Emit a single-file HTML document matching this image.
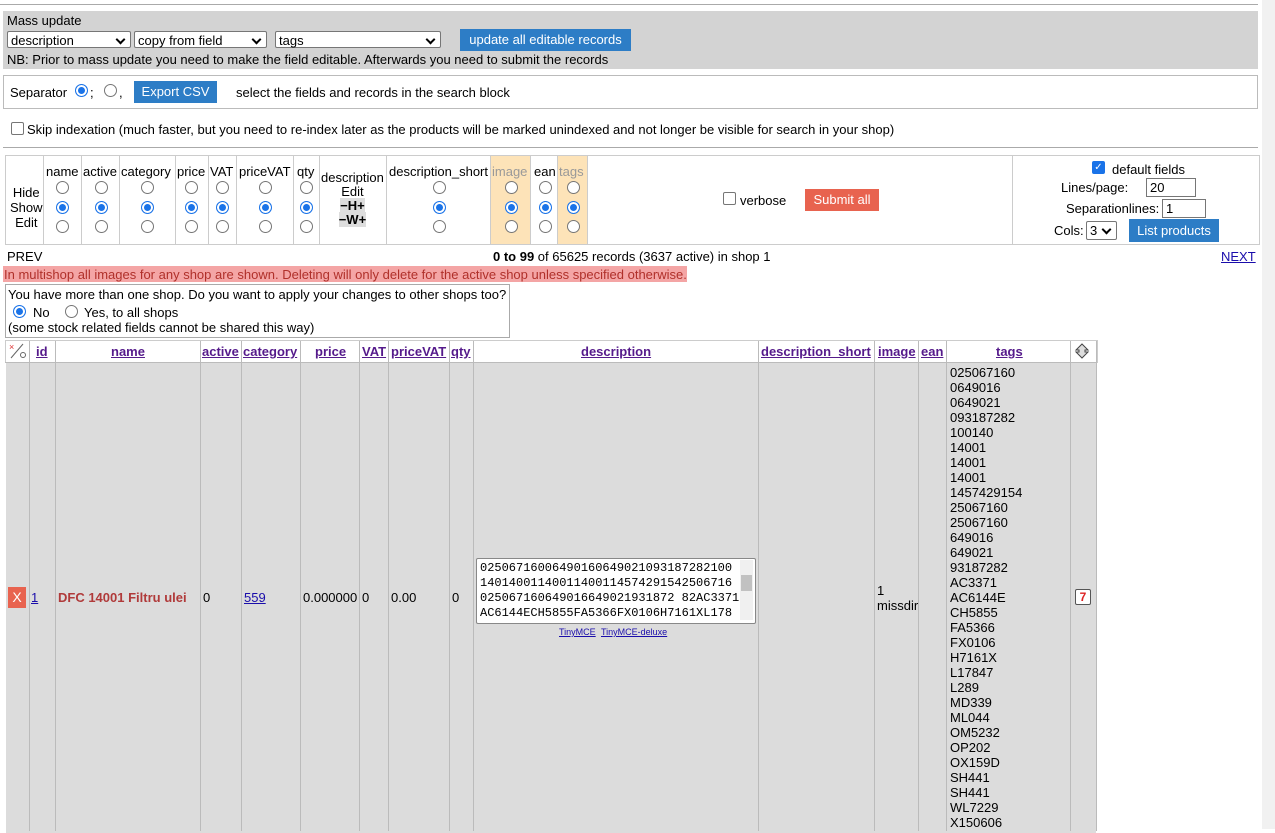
<!DOCTYPE html>
<html><head><style>
body{margin:0;width:1275px;height:829px;overflow:hidden;background:#fff;font-family:"Liberation Sans",Arial,sans-serif;font-size:13px;color:#000;position:relative}
.a{position:absolute;white-space:nowrap}
.r,.rc{position:absolute;width:11px;height:11px;border:1px solid #767676;border-radius:50%;background:#fff}
.rc{border-color:#1a73e8;background:#1a73e8;box-shadow:inset 0 0 0 2px #fff}
.sel{position:absolute;height:17px;border:1px solid #767676;border-radius:2px;background:#fff;font-size:13px;line-height:17px;padding-left:3px;box-sizing:border-box}
.sel:after{content:"";position:absolute;right:6px;top:4px;width:5px;height:5px;border-right:2px solid #000;border-bottom:2px solid #000;transform:rotate(45deg)}
.btn{position:absolute;color:#fff;text-align:center;font-size:13px}
.vl{position:absolute;width:1px;background:#ccc}
.u{color:#551a8b;text-decoration:underline;font-weight:bold}
.inp{position:absolute;border:1px solid #767676;background:#fff;height:19px;box-sizing:border-box;padding-left:3px;line-height:17px}
.cb{position:absolute;width:11px;height:11px;border:1px solid #767676;border-radius:2px;background:#fff}
</style></head><body>
<div class="a" style="left:0;top:4px;width:1258px;height:1px;background:#aaa"></div>
<div class="a" style="left:3px;top:11px;width:1255px;height:58px;background:#d3d3d3"></div>
<div class="a" style="left:7px;top:13px">Mass update</div>
<div class="sel" style="left:7px;top:31px;width:124px">description</div>
<div class="sel" style="left:134px;top:31px;width:133px">copy from field</div>
<div class="sel" style="left:275px;top:31px;width:166px">tags</div>
<div class="btn" style="left:460px;top:29px;width:171px;height:22px;line-height:22px;background:#2d7dc6">update all editable records</div>
<div class="a" style="left:7px;top:52px">NB: Prior to mass update you need to make the field editable. Afterwards you need to submit the records</div>

<div class="a" style="left:3px;top:75px;width:1253px;height:32px;border:1px solid #bbb"></div>
<div class="a" style="left:10px;top:85px">Separator</div>
<div class="rc" style="left:75px;top:84px"></div><div class="a" style="left:90px;top:85px">;</div>
<div class="r" style="left:104px;top:84px"></div><div class="a" style="left:119px;top:85px">,</div>
<div class="btn" style="left:134px;top:81px;width:83px;height:22px;line-height:22px;background:#2d7dc6">Export CSV</div>
<div class="a" style="left:236px;top:85px">select the fields and records in the search block</div>

<div class="cb" style="left:11px;top:122px"></div>
<div class="a" style="left:27px;top:122px">Skip indexation (much faster, but you need to re-index later as the products will be marked unindexed and not longer be visible for search in your shop)</div>
<div class="a" style="left:3px;top:147px;width:1255px;height:1px;background:#aaa"></div>

<div class="a" style="left:5px;top:155px;width:1253px;height:88px;border:1px solid #ccc"></div>
<div class="a" style="left:490px;top:156px;width:40px;height:88px;background:#fde3b8"></div>
<div class="a" style="left:557px;top:156px;width:30px;height:88px;background:#fde3b8"></div>
<div class="vl" style="left:43px;top:156px;height:88px"></div>
<div class="vl" style="left:81px;top:156px;height:88px"></div>
<div class="vl" style="left:119px;top:156px;height:88px"></div>
<div class="vl" style="left:175px;top:156px;height:88px"></div>
<div class="vl" style="left:208px;top:156px;height:88px"></div>
<div class="vl" style="left:236px;top:156px;height:88px"></div>
<div class="vl" style="left:293px;top:156px;height:88px"></div>
<div class="vl" style="left:319px;top:156px;height:88px"></div>
<div class="vl" style="left:386px;top:156px;height:88px"></div>
<div class="vl" style="left:490px;top:156px;height:88px"></div>
<div class="vl" style="left:530px;top:156px;height:88px"></div>
<div class="vl" style="left:557px;top:156px;height:88px"></div>
<div class="vl" style="left:587px;top:156px;height:88px"></div>
<div class="vl" style="left:1012px;top:156px;height:88px"></div>
<div class="a" style="left:10px;top:185px;line-height:15px;text-align:center">Hide<br>Show<br>Edit</div>
<div class="a" style="left:46px;top:164px">name</div>
<div class="a" style="left:83px;top:164px">active</div>
<div class="a" style="left:121px;top:164px">category</div>
<div class="a" style="left:177px;top:164px">price</div>
<div class="a" style="left:210px;top:164px">VAT</div>
<div class="a" style="left:239px;top:164px">priceVAT</div>
<div class="a" style="left:297px;top:164px">qty</div>
<div class="a" style="left:321px;top:171px;line-height:14px;text-align:center">description<br>Edit<br><b style="background:#ddd">−H+</b><br><b style="background:#ddd">−W+</b></div>
<div class="a" style="left:389px;top:164px">description_short</div>
<div class="a" style="left:492px;top:164px;color:#999">image</div>
<div class="a" style="left:534px;top:164px">ean</div>
<div class="a" style="left:559px;top:164px;color:#999">tags</div>
<div class="r" style="left:56px;top:181px"></div><div class="rc" style="left:56px;top:201px"></div><div class="r" style="left:56px;top:220px"></div>
<div class="r" style="left:95px;top:181px"></div><div class="rc" style="left:95px;top:201px"></div><div class="r" style="left:95px;top:220px"></div>
<div class="r" style="left:141px;top:181px"></div><div class="rc" style="left:141px;top:201px"></div><div class="r" style="left:141px;top:220px"></div>
<div class="r" style="left:185px;top:181px"></div><div class="rc" style="left:185px;top:201px"></div><div class="r" style="left:185px;top:220px"></div>
<div class="r" style="left:216px;top:181px"></div><div class="rc" style="left:216px;top:201px"></div><div class="r" style="left:216px;top:220px"></div>
<div class="r" style="left:259px;top:181px"></div><div class="rc" style="left:259px;top:201px"></div><div class="r" style="left:259px;top:220px"></div>
<div class="r" style="left:300px;top:181px"></div><div class="rc" style="left:300px;top:201px"></div><div class="r" style="left:300px;top:220px"></div>
<div class="r" style="left:433px;top:181px"></div><div class="rc" style="left:433px;top:201px"></div><div class="r" style="left:433px;top:220px"></div>
<div class="r" style="left:505px;top:181px"></div><div class="rc" style="left:505px;top:201px"></div><div class="r" style="left:505px;top:220px"></div>
<div class="r" style="left:539px;top:181px"></div><div class="rc" style="left:539px;top:201px"></div><div class="r" style="left:539px;top:220px"></div>
<div class="r" style="left:567px;top:181px"></div><div class="rc" style="left:567px;top:201px"></div><div class="r" style="left:567px;top:220px"></div>
<div class="cb" style="left:723px;top:192px"></div>
<div class="a" style="left:740px;top:193px">verbose</div>
<div class="btn" style="left:805px;top:189px;width:74px;height:22px;line-height:22px;background:#e8634f">Submit all</div>
<div class="cb" style="left:1092px;top:161px;background:#1a73e8;border-color:#1a73e8;color:#fff;font-size:10px;line-height:11px;text-align:center">✓</div>
<div class="a" style="left:1112px;top:162px">default fields</div>
<div class="a" style="left:1061px;top:180px">Lines/page:</div>
<div class="inp" style="left:1146px;top:178px;width:50px">20</div>
<div class="a" style="left:1066px;top:201px">Separationlines:</div>
<div class="inp" style="left:1162px;top:199px;width:44px">1</div>
<div class="a" style="left:1054px;top:223px">Cols:</div>
<div class="sel" style="left:1086px;top:221px;width:31px;height:19px">3</div>
<div class="btn" style="left:1129px;top:219px;width:90px;height:23px;line-height:23px;background:#2d7dc6">List products</div>

<div class="a" style="left:7px;top:249px">PREV</div>
<div class="a" style="left:493px;top:249px"><b>0 to 99</b> of 65625 records (3637 active) in shop 1</div>
<div class="a" style="left:1221px;top:249px;color:#1a0dab;text-decoration:underline">NEXT</div>
<div class="a" style="left:3px;top:266px;width:684px;height:16px;background:#f4a5a5"></div>
<div class="a" style="left:4px;top:267px;color:#b0302a">In multishop all images for any shop are shown. Deleting will only delete for the active shop unless specified otherwise.</div>
<div class="a" style="left:5px;top:284px;width:503px;height:52px;border:1px solid #aaa"></div>
<div class="a" style="left:8px;top:287px">You have more than one shop. Do you want to apply your changes to other shops too?</div>
<div class="rc" style="left:13px;top:305px"></div><div class="a" style="left:33px;top:305px">No</div>
<div class="r" style="left:65px;top:305px"></div><div class="a" style="left:84px;top:305px">Yes, to all shops</div>
<div class="a" style="left:8px;top:320px">(some stock related fields cannot be shared this way)</div>

<div class="a" style="left:5px;top:340px;width:1091px;height:22px;border:1px solid #ccc;border-bottom:none"></div>
<div class="a" style="left:6px;top:363px;width:1090px;height:470px;background:#dcdcdc"></div>
<div class="a" style="left:5px;top:362px;width:1091px;height:1px;background:#bbb"></div>
<div class="vl" style="left:29px;top:341px;height:490px;background:#bbb"></div>
<div class="vl" style="left:55px;top:341px;height:490px;background:#bbb"></div>
<div class="vl" style="left:200px;top:341px;height:490px;background:#bbb"></div>
<div class="vl" style="left:241px;top:341px;height:490px;background:#bbb"></div>
<div class="vl" style="left:300px;top:341px;height:490px;background:#bbb"></div>
<div class="vl" style="left:359px;top:341px;height:490px;background:#bbb"></div>
<div class="vl" style="left:388px;top:341px;height:490px;background:#bbb"></div>
<div class="vl" style="left:449px;top:341px;height:490px;background:#bbb"></div>
<div class="vl" style="left:473px;top:341px;height:490px;background:#bbb"></div>
<div class="vl" style="left:758px;top:341px;height:490px;background:#bbb"></div>
<div class="vl" style="left:874px;top:341px;height:490px;background:#bbb"></div>
<div class="vl" style="left:918px;top:341px;height:490px;background:#bbb"></div>
<div class="vl" style="left:946px;top:341px;height:490px;background:#bbb"></div>
<div class="vl" style="left:1070px;top:341px;height:490px;background:#bbb"></div>
<div class="vl" style="left:1096px;top:341px;height:490px;background:#bbb"></div>
<svg class="a" style="left:8px;top:342px" width="20" height="18"><text x="1" y="8" font-size="9" fill="#d33" font-family="Liberation Sans">×</text><line x1="3" y1="16" x2="15" y2="2" stroke="#666" stroke-width="1"/><circle cx="15" cy="13" r="2.5" fill="none" stroke="#666"/></svg>
<div class="a u" style="left:36px;top:344px">id</div>
<div class="a u" style="left:111px;top:344px">name</div>
<div class="a u" style="left:202px;top:344px">active</div>
<div class="a u" style="left:243px;top:344px">category</div>
<div class="a u" style="left:315px;top:344px">price</div>
<div class="a u" style="left:362px;top:344px">VAT</div>
<div class="a u" style="left:391px;top:344px">priceVAT</div>
<div class="a u" style="left:451px;top:344px">qty</div>
<div class="a u" style="left:581px;top:344px">description</div>
<div class="a u" style="left:761px;top:344px">description_short</div>
<div class="a u" style="left:878px;top:344px">image</div>
<div class="a u" style="left:921px;top:344px">ean</div>
<div class="a u" style="left:996px;top:344px">tags</div>
<svg class="a" style="left:1074px;top:343px" width="16" height="16"><path d="M8 1 L14 7 L11 7 L11 9 L14 9 L8 15 L2 9 L5 9 L5 7 L2 7 Z" fill="#ddd" stroke="#444"/></svg>

<div class="btn" style="left:8px;top:587px;width:18px;height:21px;line-height:21px;background:#e8634f;font-size:14px">X</div>
<div class="a" style="left:31px;top:590px;color:#1a0dab;text-decoration:underline">1</div>
<div class="a" style="left:58px;top:590px;color:#b03a3a;font-weight:bold">DFC 14001 Filtru ulei</div>
<div class="a" style="left:203px;top:590px">0</div>
<div class="a" style="left:244px;top:590px;color:#1a0dab;text-decoration:underline">559</div>
<div class="a" style="left:303px;top:590px">0.000000</div>
<div class="a" style="left:362px;top:590px">0</div>
<div class="a" style="left:391px;top:590px">0.00</div>
<div class="a" style="left:452px;top:590px">0</div>
<div class="a" style="left:476px;top:558px;width:278px;height:64px;background:#fff;border:1px solid #888;border-radius:2px"></div>
<div class="a" style="left:480px;top:561px;font-family:'Liberation Mono',monospace;font-size:12px;line-height:15px">02506716006490160649021093187282100<br>14014001140011400114574291542506716<br>025067160649016649021931872 82AC3371<br>AC6144ECH5855FA5366FX0106H7161XL178</div>
<div class="a" style="left:740px;top:560px;width:13px;height:60px;background:#f0f0f0"></div>
<div class="a" style="left:741px;top:575px;width:11px;height:16px;background:#c1c1c1"></div>
<div class="a" style="left:559px;top:627px;font-size:9px;color:#1a0dab;text-decoration:underline">TinyMCE</div>
<div class="a" style="left:601px;top:627px;font-size:9px;color:#1a0dab;text-decoration:underline">TinyMCE-deluxe</div>
<div class="a" style="left:877px;top:583px;line-height:15px">1<br>missdir</div>
<div class="a" style="left:950px;top:365px;line-height:15px">025067160<br>0649016<br>0649021<br>093187282<br>100140<br>14001<br>14001<br>14001<br>1457429154<br>25067160<br>25067160<br>649016<br>649021<br>93187282<br>AC3371<br>AC6144E<br>CH5855<br>FA5366<br>FX0106<br>H7161X<br>L17847<br>L289<br>MD339<br>ML044<br>OM5232<br>OP202<br>OX159D<br>SH441<br>SH441<br>WL7229<br>X150606</div>
<div class="a" style="left:1075px;top:589px;width:14px;height:14px;border:1px solid #555;border-radius:2px;background:#fff;color:#d22;font-weight:bold;font-size:12px;line-height:14px;text-align:center">7</div>
<div class="a" style="left:1262px;top:0;width:13px;height:829px;background:#f1f1f1"></div>
</body></html>
